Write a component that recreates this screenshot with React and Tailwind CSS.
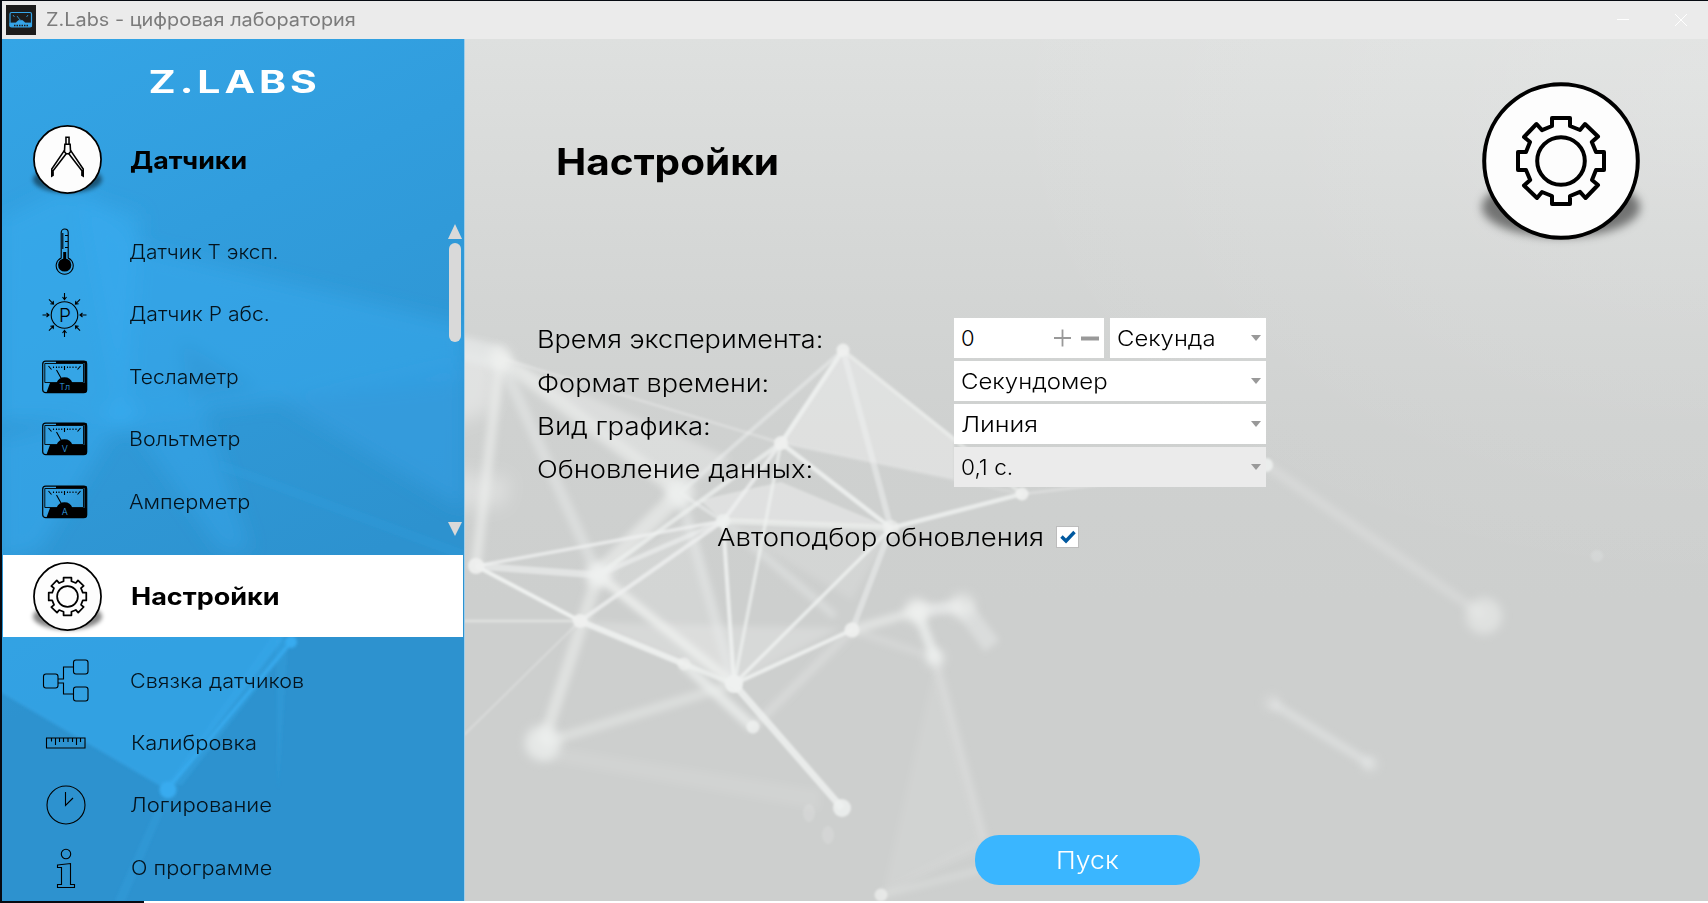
import React from "react";

const NODES = {
  a: [476, 566], b: [598, 575], c: [580, 621], d: [684, 664], e: [734, 684], f: [753, 727],
  g: [543, 743], h: [842, 808], i: [852, 630], j: [917, 611], k: [935, 658], l: [962, 606],
  m: [992, 646], o: [881, 895], r: [1484, 616], s: [1272, 703], t: [1370, 764],
  n1: [843, 350], n2: [781, 443], n3: [680, 493], n4: [723, 521], n5: [891, 528],
  n6: [1022, 494], n7: [1266, 465], n8: [500, 358],
  x1: [464, 621], x2: [464, 735], x3: [984, 840], x5: [1060, 850], x7: [835, 616],
  x9: [450, 345],
};

// [from, to, width, opacity]
const SHARP = [
  ["a", "c", 4, 0.95], ["a", "n4", 3.5, 0.75], ["c", "n4", 4, 0.75], ["c", "d", 6, 0.85], ["d", "e", 5, 0.7],
  ["e", "n4", 4, 0.85], ["e", "n2", 3.5, 0.7], ["e", "n5", 3.5, 0.8], ["e", "i", 4, 0.85], ["e", "h", 7, 0.8],
  ["i", "n5", 6, 0.5], ["n2", "n1", 4.5, 0.85], ["n1", "n3", 4, 0.45], ["n2", "n4", 4, 0.75], ["n2", "n5", 4.5, 0.85],
  ["n2", "b", 4.5, 0.7], ["n4", "b", 5, 0.6], ["n4", "n5", 6, 0.55], ["n5", "n6", 4.5, 0.8], ["n1", "n5", 6, 0.5],
  ["n1", "n6", 4, 0.55], ["n2", "n6", 3, 0.2], ["n8", "n2", 3, 0.35], ["c", "x1", 2.5, 0.55], ["c", "x2", 2, 0.35],
  ["n6", "n7", 3, 0.35], ["a", "b", 7, 0.6], ["n3", "n4", 4, 0.5],
];
const SOFT = [
  ["b", "n3", 16, 0.6], ["b", "e", 9, 0.85], ["b", "g", 12, 0.55], ["e", "g", 10, 0.42], ["d", "f", 10, 0.75],
  ["i", "f", 8, 0.32], ["i", "j", 9, 0.6], ["j", "k", 10, 0.75], ["j", "l", 12, 0.65], ["l", "m", 18, 0.4],
  ["k", "x3", 8, 0.3], ["i", "k", 7, 0.25], ["n8", "n3", 14, 0.55], ["n8", "b", 11, 0.4], ["n3", "e", 10, 0.4],
  ["o", "x5", 5, 0.35], ["s", "t", 9, 0.4], ["n7", "r", 10, 0.25], ["x3", "o", 6, 0.08], ["a", "n8", 10, 0.6],
  ["n4", "x7", 7, 0.4], ["x9", "n8", 24, 0.5],
];
const DOTS = [
  ["a", 8, 0.9], ["c", 7, 0.9], ["e", 9, 0.95], ["n1", 6.5, 0.9], ["n2", 7, 0.9], ["n4", 7, 0.75], ["n5", 8, 0.65],
  ["n6", 6.5, 0.9], ["n7", 7, 0.85], ["i", 7.5, 0.9], ["f", 6.5, 0.8], ["d", 6.5, 0.7], ["h", 9, 0.85], ["o", 6.5, 0.7],
];
const GLOWS = [
  ["b", 12, 0.95], ["g", 18, 0.75], ["n3", 14, 0.8], ["n8", 11, 0.85], ["j", 12, 0.85], ["l", 13, 0.55], ["k", 9, 0.8],
  ["r", 18, 0.55], ["s", 8, 0.3], ["t", 7, 0.5],
];

function Lines({ list }) {
  return list.map(([p, q, w, o]) => (
    <line key={p + q} x1={NODES[p][0]} y1={NODES[p][1]} x2={NODES[q][0]} y2={NODES[q][1]} strokeWidth={w} strokeOpacity={o} />
  ));
}
function Dots({ list }) {
  return list.map(([p, r, o]) => <circle key={p} cx={NODES[p][0]} cy={NODES[p][1]} r={r} fillOpacity={o} />);
}

function MainBackdrop() {
  return (
    <svg className="absolute inset-0 size-full" viewBox="465 39 1243 862" preserveAspectRatio="none" aria-hidden="true">
      <defs>
        <linearGradient id="gray" x1="0" y1="0" x2="0" y2="1">
          <stop offset="0" stopColor="#dee0df" />
          <stop offset="0.3" stopColor="#d3d5d4" />
          <stop offset="0.45" stopColor="#cfd1d0" />
          <stop offset="0.65" stopColor="#cdcfce" />
          <stop offset="1" stopColor="#cdcfce" />
        </linearGradient>
        <radialGradient id="corner" cx="1" cy="0.05" r="0.6">
          <stop offset="0" stopColor="#fff" stopOpacity="0.15" />
          <stop offset="1" stopColor="#fff" stopOpacity="0" />
        </radialGradient>
        <filter id="b1" x="-10%" y="-10%" width="120%" height="120%"><feGaussianBlur stdDeviation="1" /></filter>
        <filter id="b3"><feGaussianBlur stdDeviation="3" /></filter>
        <filter id="b5"><feGaussianBlur stdDeviation="5" /></filter>
        <filter id="b9" x="-100%" y="-50%" width="300%" height="200%"><feGaussianBlur stdDeviation="9" /></filter>
      </defs>
      <rect x="464" y="39" width="1244" height="862" fill="url(#gray)" />
      <rect x="464" y="39" width="1244" height="862" fill="url(#corner)" />
      <g fill="#fff" filter="url(#b9)">
        <path d="M440 345 500 355 492 410 440 430Z" fillOpacity="0.35" />
        <path d="M440 470 510 478 505 505 440 512Z" fillOpacity="0.3" />
      </g>
      <g fill="#fff" filter="url(#b3)">
        <path d="M500 358 730 458 680 493Z" fillOpacity="0.25" />
        <path d="M580 622 840 628 734 684 684 664Z" fillOpacity="0.2" />
        <path d="M720 521 891 528 852 600Z" fillOpacity="0.12" />
        <path d="M935 665 884 890 984 850Z" fillOpacity="0.08" />
        <path d="M543 745 820 790 820 810 543 760Z" fillOpacity="0.08" />
        <path d="M598 575 690 520 734 684Z" fillOpacity="0.12" />
      </g>
      <g fill="#fff" filter="url(#b1)">
        <path d="M843 350 781 443 954 479 954 437Z" fillOpacity="0.33" />
        <path d="M700 500 781 482 891 528 723 521Z" fillOpacity="0.35" />
      </g>
      <g stroke="#eef0ef" fill="none" filter="url(#b3)"><Lines list={SOFT} /></g>
      <g stroke="#f0f2f1" fill="none" filter="url(#b1)"><Lines list={SHARP} /></g>
      <g fill="#eef0ef" filter="url(#b5)"><Dots list={GLOWS} /></g>
      <g fill="#eff1f0" filter="url(#b1)">
        <Dots list={DOTS} />
        <circle cx="1597" cy="556" r="6" fillOpacity="0.22" />
        <ellipse cx="809" cy="813" rx="6" ry="9" fillOpacity="0.2" />
        <ellipse cx="828" cy="835" rx="6" ry="9" fillOpacity="0.2" />
      </g>
    </svg>
  );
}

function SideBackdrop() {
  return (
    <svg className="absolute inset-0 size-full" viewBox="2 39 462 862" preserveAspectRatio="none" aria-hidden="true">
      <defs>
        <linearGradient id="blue" x1="0" y1="0" x2="0.25" y2="1">
          <stop offset="0" stopColor="#34a5e6" />
          <stop offset="0.3" stopColor="#319ddd" />
          <stop offset="0.55" stopColor="#2f97d5" />
          <stop offset="0.75" stopColor="#2d92cf" />
          <stop offset="1" stopColor="#2d92cf" />
        </linearGradient>
        <filter id="s2"><feGaussianBlur stdDeviation="1.800" /></filter>
        <filter id="s8"><feGaussianBlur stdDeviation="9" /></filter>
      </defs>
      <rect x="2" y="39" width="462" height="862" fill="url(#blue)" />
      <g filter="url(#s8)">
        <path d="M0 220 60 190 140 215 125 420 0 420Z" fill="#37abef" fillOpacity="0.6" />
        <path d="M80 190 150 250 464 325 464 380 280 400 120 420Z" fill="#37abef" fillOpacity="0.5" />
        <path d="M180 340 260 390 190 400Z" fill="#2d94d1" fillOpacity="0.5" />
        <path d="M280 400 464 360 464 510Z" fill="#359fe2" fillOpacity="0.6" />
        <path d="M125 410 0 440 0 560 40 550Z" fill="#37abef" fillOpacity="0.5" />
        <path d="M125 415 220 550 250 550 200 400Z" fill="#37abef" fillOpacity="0.4" />
        <circle cx="122" cy="415" r="16" fill="#37abef" fillOpacity="0.8" />
      </g>
      <g filter="url(#s2)">
        <path d="M0 630 290 630 167 790 0 692Z" fill="#37a9ed" fillOpacity="0.65" />
        <path d="M275 632 167 785 182 785 291 645Z" fill="#38acf0" fillOpacity="0.3" />
        <path d="M291 642 167 790" stroke="#38acf0" strokeWidth="3" />
        <circle cx="291" cy="642" r="6" fill="#37abef" />
        <circle cx="168" cy="790" r="8.500" fill="#37abef" />
        <path d="M160 800 115 901 125 901 168 800Z" fill="#37a9ed" fillOpacity="0.2" />
        <path d="M276 640 278 790 288 640Z" fill="#37a9ed" fillOpacity="0.2" />
        <path d="M220 460 464 550 464 560 220 470Z" fill="#37a9ed" fillOpacity="0.15" />
      </g>
    </svg>
  );
}

const GEAR_QUARTER = [[9, -43], [9, -35], [19, -31], [24, -37], [37, -24.5], [30.8, -19], [35, -9], [43, -9]];
function gearPath() {
  const all = [];
  let cur = GEAR_QUARTER;
  for (let n = 0; n < 4; n++) {
    all.push(...cur);
    cur = cur.map(([x, y]) => [-y, x]);
  }
  return "M" + all.map((p) => p.join(" ")).join("L") + "Z";
}

function Disc({ size, children, id }) {
  return (
    <svg className="shrink-0 overflow-visible" width={size} height={size} viewBox="-79 -79 158 158" aria-hidden="true">
      <defs><filter id={id} x="-20%" y="-40%" width="140%" height="180%"><feGaussianBlur stdDeviation="5" /></filter></defs>
      <ellipse cx="0" cy="46" rx="79" ry="30" fill="#000" fillOpacity="0.48" filter={`url(#${id})`} />
      <circle r="76.800" fill="#fdfdfd" stroke="#000" strokeWidth="4" />
      {children}
    </svg>
  );
}
function Gear() {
  return (
    <g fill="none" stroke="#000" strokeWidth="4" strokeLinejoin="round">
      <path d={gearPath()} />
      <circle r="23.800" />
    </g>
  );
}
function Compass() {
  return (
    <g fill="none" stroke="#000" strokeWidth="3.600">
      <path d="M-3.500 -51H3.500V-35H-3.500ZM-6 -35H6L7 -18 3 -13H-3L-7 -18Z" />
      <path d="M-7 -21-36 22V38L-33 36V26L-3 -13M7 -21 36 22V38L33 36V26L3 -13" />
    </g>
  );
}

function Icon({ children }) {
  return (
    <svg className="mr-[39px] ml-[38px] shrink-0" width="50" height="50" viewBox="0 0 50 50" fill="none" stroke="#000" strokeWidth="1.100" aria-hidden="true">
      {children}
    </svg>
  );
}
function Thermometer() {
  return (
    <Icon>
      <path d="M21.200 31V5.500a3.500 3.500 0 0 1 7 0V31a8.500 8.500 0 1 1-7 0Z" />
      <circle cx="24.700" cy="38" r="6.600" fill="#000" stroke="none" />
      <path d="M24.700 38V25" strokeWidth="3" />
      <path d="M25 8.500h3M25 14.500h3M25 20.500h3M22.800 6v16" />
    </Icon>
  );
}
function Pressure() {
  return (
    <Icon>
      <g transform="translate(24.500 25)">
        <circle r="13.300" />
        <text x="0.500" y="7" textAnchor="middle" fontSize="19" fill="#000" stroke="none" className="font-['Inter'] font-light">P</text>
        {[0, 45, 90, 135, 180, 225, 270, 315].map((a) => (
          <path key={a} transform={`rotate(${a})`} d="M0 -22V-15.500M-2 -18 0 -15.500 2 -18" />
        ))}
      </g>
    </Icon>
  );
}
function Meter({ unit }) {
  return (
    <Icon>
      <rect x="2.700" y="9.200" width="44" height="31.500" rx="3" strokeWidth="1.200" />
      <path d="M16 10H45.500V31" strokeWidth="2.200" />
      <path d="M4.800 30.500V11.500H43.500V30.500Z" strokeWidth="0.900" />
      <path d="M10 31H16.500a8.500 8.500 0 0 1 16 0H47V38.500a2 2 0 0 1-2 2H6.500Z" fill="#000" stroke="none" />
      <path d="M16.500 18 21 26M8.500 14l3 3.500M40.500 14l-3 3.500M24.500 14v4M13.500 14.500v1.500M16.500 14.500v1.500M19 14.500v1.500M21.700 14.500v1.500M27.500 14.500v1.500M30 14.500v1.500M33 14.500v1.500M36 14.500v1.500" />
      <text x="24.700" y="37.500" textAnchor="middle" fontSize="9" fill="#36a6e8" stroke="none" className="font-['Inter'] font-light">{unit}</text>
    </Icon>
  );
}
function LinkIcon() {
  return (
    <Icon>
      <rect x="3.500" y="18" width="14.500" height="14" rx="2.500" />
      <rect x="33.500" y="4" width="14.500" height="14" rx="2.500" />
      <rect x="33.500" y="31" width="14.500" height="14" rx="2.500" />
      <path d="M18 23H23.500V11H33.500M18 27H23.500V38H33.500" />
    </Icon>
  );
}
function RulerIcon() {
  return (
    <Icon>
      <path d="M6.500 20H45V30H6.500ZM11.500 20v3.500M15.500 20v7M19.500 20v4M23.500 20v4M28 20v4M32.500 20v4M36.500 20v7M40.500 20v4" />
    </Icon>
  );
}
function ClockIcon() {
  return (
    <Icon>
      <circle cx="26" cy="25" r="19" />
      <path d="M25.500 12V25.500L33 18" />
    </Icon>
  );
}
function InfoIcon() {
  return (
    <Icon>
      <circle cx="26" cy="11" r="4.700" />
      <path d="M17.500 22 30.500 20.500V41.500H34.500V44.500H17.500V41.500H21.500V24.500H17.500Z" />
    </Icon>
  );
}

function Row({ icon, label, stretch, indent = "" }) {
  return (
    <div className="flex h-[62.4px] items-center">
      {icon}
      <span className={`origin-left pt-px text-[19.5px] font-[350] whitespace-nowrap text-[#04131d] ${indent} ${stretch}`}>{label}</span>
    </div>
  );
}

function Select({ label, cls, stretch }) {
  return (
    <div className={`flex h-10 items-center justify-between pr-[5px] pl-[7px] ${cls}`}>
      <span className={`origin-left text-[22px] font-[350] whitespace-nowrap ${stretch}`}>{label}</span>
      <svg width="10" height="6" viewBox="0 0 10 6" aria-hidden="true"><path d="M0 0H10L5 6Z" fill="#999" /></svg>
    </div>
  );
}

function Label({ children, stretch }) {
  return (
    <div className="flex h-[43.300px] items-center">
      <span className={`origin-left pt-[1.500px] text-[24px] font-[350] whitespace-nowrap ${stretch}`}>{children}</span>
    </div>
  );
}

export default function App() {
  return (
    <div className="flex h-[903px] w-[1708px] flex-col overflow-hidden bg-[#060a12] pt-px pl-[2px] font-['Inter','Liberation_Sans',sans-serif] text-black">
      <header className="flex h-[38px] shrink-0 items-center bg-[#ebebeb] pl-1">
        <svg width="30" height="30" viewBox="0 0 30 30" aria-hidden="true">
          <rect width="30" height="30" fill="#1c1c1c" />
          <rect x="4" y="7.500" width="21.500" height="14.500" rx="1.500" fill="none" stroke="#36a6ea" strokeWidth="1.200" />
          <path d="M4 18H10a5 5 0 0 1 9 0H25.500V21.500H4ZM11 11l3 4M7 10l1.500 2M22 10l-1.500 2" fill="#36a6ea" stroke="#36a6ea" strokeWidth="0.800" />
          <path d="M8 20.500H22" stroke="#1c1c1c" strokeWidth="1.500" strokeDasharray="1.500 1" />
        </svg>
        <span className="ml-[10px] origin-left scale-x-[1.105] pb-[2px] text-[18px] whitespace-nowrap text-[#7b7b7b]">Z.Labs - цифровая лаборатория</span>
        <div className="ml-auto flex items-center gap-[46px] pr-[21px]">
          <svg width="12" height="12" viewBox="0 0 12 12" stroke="#fff" aria-hidden="true"><path d="M0 5.500H12" /></svg>
          <svg width="12" height="12" viewBox="0 0 12 12" stroke="#fff" aria-hidden="true"><path d="M0 0 12 12M12 0 0 12" /></svg>
        </div>
      </header>

      <div className="flex h-[862px] shrink-0">
        <aside className="relative w-[462px] shrink-0">
          <SideBackdrop />
          <div className="relative flex flex-col">
            <div className="flex h-[79px] items-center justify-center pt-[7px]">
              <span className="scale-x-[1.32] pl-[3px] text-[31px] font-bold tracking-[3px] text-white">Z.LABS</span>
            </div>
            <div className="flex h-[83px] items-center">
              <div className="ml-[31px] flex"><Disc size={69} id="sh1"><Compass /></Disc></div>
              <span className="ml-[28px] origin-left scale-x-[1.115] pt-[2px] text-[24px] font-bold">Датчики</span>
            </div>
            <div className="mt-5 flex h-[312px] justify-between">
              <div>
                <Row icon={<Thermometer />} label="Датчик T эксп." stretch="scale-x-[1.07]" />
                <Row icon={<Pressure />} label="Датчик P абс." stretch="scale-x-[1.085]" />
                <Row icon={<Meter unit="Тл" />} label="Тесламетр" stretch="scale-x-[1.08]" />
                <Row icon={<Meter unit="V" />} label="Вольтметр" stretch="scale-x-[1.1]" />
                <Row icon={<Meter unit="A" />} label="Амперметр" stretch="scale-x-[1.11]" />
              </div>
              <div className="mr-[2px] flex flex-col items-center pt-[3px]">
                <svg width="14" height="15" viewBox="0 0 14 15" className="shrink-0" aria-hidden="true"><path d="M7 0 14 15H0Z" fill="#d9d9d9" /></svg>
                <div className="mt-1 h-[99px] w-3 shrink-0 rounded-full bg-[#d9d9d9]" />
                <svg className="mt-[180px] shrink-0" width="14" height="14" viewBox="0 0 14 14" aria-hidden="true"><path d="M7 14 14 0H0Z" fill="#d9d9d9" /></svg>
              </div>
            </div>
            <div className="mx-px mt-[22px] flex h-[82px] items-center bg-white">
              <div className="ml-[30px] flex"><Disc size={69} id="sh2"><Gear /></Disc></div>
              <span className="ml-[29px] origin-left scale-x-[1.125] pt-[2px] text-[24px] font-bold">Настройки</span>
            </div>
            <div className="mt-[12.500px]">
              <Row icon={<LinkIcon />} label="Связка датчиков" indent="ml-px" stretch="scale-x-[1.105]" />
              <Row icon={<RulerIcon />} label="Калибровка" indent="ml-[1.500px]" stretch="scale-x-[1.12]" />
              <Row icon={<ClockIcon />} label="Логирование" indent="ml-px" stretch="scale-x-[1.135]" />
              <Row icon={<InfoIcon />} label="О программе" indent="ml-[1.500px]" stretch="scale-x-[1.11]" />
            </div>
          </div>
        </aside>

        <main className="relative min-w-0 flex-1 border-l border-[#9fcdea]">
          <MainBackdrop />
          <div className="relative flex h-full flex-col">
            <div className="flex h-[244px] items-center justify-between pr-[68px] pl-[91px]">
              <h1 className="origin-left scale-x-[1.095] pt-px text-[37px] font-bold">Настройки</h1>
              <Disc size={158} id="sh3"><Gear /></Disc>
            </div>
            <div className="mt-[35px] flex h-[174px] pl-[72px]">
              <div className="w-[417px]">
                <Label stretch="scale-x-[1.127]">Время эксперимента:</Label>
                <Label stretch="scale-x-[1.127]">Формат времени:</Label>
                <Label stretch="scale-x-[1.147]">Вид графика:</Label>
                <Label stretch="scale-x-[1.14]">Обновление данных:</Label>
              </div>
              <div className="flex w-[312px] flex-col gap-[3px]">
                <div className="flex gap-[6px]">
                  <div className="flex h-10 w-[150px] items-center justify-between bg-white pr-[5px] pl-[7px]">
                    <span className="pt-px text-[22px] font-[350]">0</span>
                    <svg width="46" height="18" viewBox="0 0 46 18" aria-hidden="true">
                      <path d="M1 9H18M9.500 0.500V17.500" stroke="#999" strokeWidth="1.800" />
                      <path d="M28 9.500H46" stroke="#999" strokeWidth="4" />
                    </svg>
                  </div>
                  <Select label="Секунда" cls="w-[156px] bg-white" stretch="scale-x-[1.085]" />
                </div>
                <Select label="Секундомер" cls="bg-white" stretch="scale-x-[1.09]" />
                <Select label="Линия" cls="bg-white" stretch="scale-x-[1.15]" />
                <Select label="0,1 с." cls="bg-[#ebebeb]" stretch="scale-x-[1.03]" />
              </div>
            </div>
            <div className="mt-[29px] flex h-8 items-center pl-[252px]">
              <span className="w-[339px] pt-px"><span className="inline-block origin-left scale-x-[1.147] text-[24px] font-[350] whitespace-nowrap">Автоподбор обновления</span></span>
              <span className="flex h-[22px] w-[23px] items-center justify-center border border-[#bdbdbd] bg-white">
                <svg width="16" height="14" viewBox="0 0 16 14" fill="none" stroke="#00589f" strokeWidth="3.400" aria-hidden="true"><path d="M1.500 6.500 6 11 14.500 2" /></svg>
              </span>
            </div>
            <button className="mt-auto mb-4 ml-[510px] h-[50px] w-[225px] rounded-[24px] bg-[#3ab6ff] pt-px text-[24px] font-[350] text-white"><span className="inline-block scale-x-[1.110]">Пуск</span></button>
          </div>
        </main>
      </div>
      <div className="ml-[142px] h-[2px] shrink-0 bg-white" />
    </div>
  );
}
